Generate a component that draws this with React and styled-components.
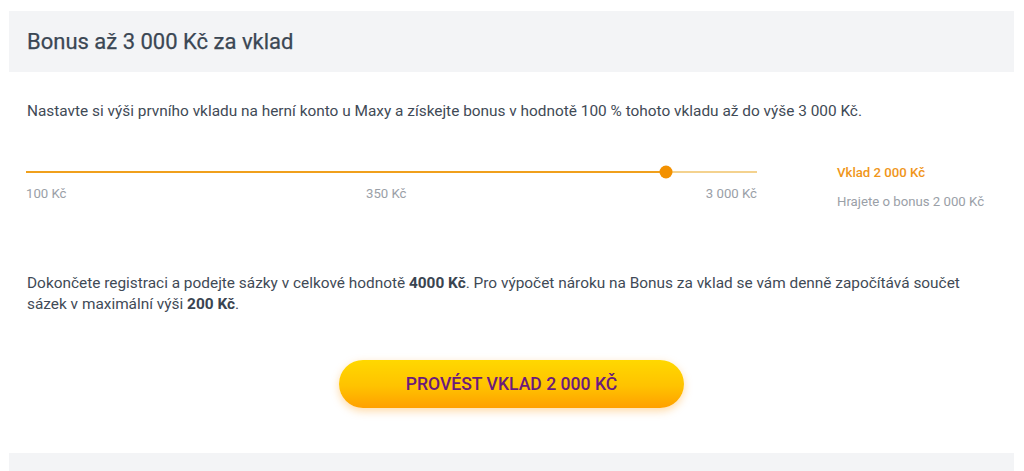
import React from "react";
import styled, { createGlobalStyle } from "styled-components";

const Global = createGlobalStyle`
  html, body { margin: 0; padding: 0; background: #fff; }
  body { font-family: Roboto, "Liberation Sans", Arial, sans-serif; }
`;

const Page = styled.div`
  width: 1005px;
  margin-left: 9px;
  padding-top: 11px;
  display: flex;
  flex-direction: column;
`;

const Header = styled.div`
  background: #f3f4f6;
  height: 61px;
  display: flex;
  align-items: center;
  padding-left: 18px;
`;

const Title = styled.h2`
  margin: 0;
  font-size: 22px;
  font-weight: 400;
  color: #3b4754;
  -webkit-text-stroke: 0.25px #3b4754;
`;

const Body = styled.div`
  padding: 29px 18px 0 18px;
  display: flex;
  flex-direction: column;
`;

const Para = styled.p`
  margin: 0;
  font-size: 15.4px;
  line-height: 21px;
  color: #3f4a56;
  b { font-weight: 700; color: #3a4450; }
`;

const SliderRow = styled.div`
  display: flex;
  margin-top: 43px;
  margin-left: -1px;
  height: 74px;
`;

const SliderCol = styled.div`
  width: 731px;
  display: flex;
  flex-direction: column;
`;

const Track = styled.div`
  position: relative;
  height: 2px;
  margin-top: 6px;
  background: #f4d28e;
`;

const Fill = styled.div`
  height: 100%;
  background: #f0a01c;
`;

const Thumb = styled.div`
  position: absolute;
  top: 50%;
  width: 13px;
  height: 13px;
  border-radius: 50%;
  background: #f39100;
  transform: translate(-50%, -50%);
`;

const Ticks = styled.div`
  display: grid;
  grid-template-columns: 340px 1fr auto;
  margin-top: 13px;
  font-size: 13.2px;
  line-height: 16px;
  color: #9aa0a7;
`;

const Tick = styled.span``;

const Info = styled.div`
  margin-left: 80px;
  display: flex;
  flex-direction: column;
  gap: 13px;
  font-size: 13.2px;
  line-height: 16px;
`;

const InfoLine = styled.span`
  color: ${(p) => (p.$accent ? "#f0961a" : "#9aa0a7")};
  font-weight: ${(p) => (p.$accent ? 500 : 400)};
`;

const Spacer = styled.div`
  height: 34px;
`;

const ButtonWrap = styled.div`
  display: flex;
  justify-content: center;
  margin-top: 45px;
`;

const Button = styled.button`
  width: 345px;
  height: 48px;
  border: none;
  border-radius: 24px;
  background: linear-gradient(180deg, #ffd800 0%, #ffc200 55%, #ffa000 100%);
  box-shadow: 0 3px 8px rgba(255, 150, 0, 0.35);
  color: #6b1a7c;
  font-family: Roboto, "Liberation Sans", Arial, sans-serif;
  font-size: 17.6px;
  font-weight: 500;
  cursor: pointer;
`;

const Footer = styled.div`
  margin-top: 45px;
  height: 20px;
  background: #f3f4f6;
`;

export default function App() {
  const pct = ((666 - 26) / 731) * 100;
  return (
    <>
      <Global />
      <Page>
        <Header>
          <Title>Bonus až 3 000 Kč za vklad</Title>
        </Header>
        <Body>
          <Para>
            Nastavte si výši prvního vkladu na herní konto u Maxy a získejte bonus v hodnotě 100 % tohoto vkladu až do výše 3 000 Kč.
          </Para>
          <SliderRow>
            <SliderCol>
              <Track>
                <Fill style={{ width: `${pct}%` }} />
                <Thumb style={{ left: `${pct}%` }} />
              </Track>
              <Ticks>
                <Tick>100 Kč</Tick>
                <Tick>350 Kč</Tick>
                <Tick>3 000 Kč</Tick>
              </Ticks>
            </SliderCol>
            <Info>
              <InfoLine $accent>Vklad 2 000 Kč</InfoLine>
              <InfoLine>Hrajete o bonus 2 000 Kč</InfoLine>
            </Info>
          </SliderRow>
          <Spacer />
          <Para>
            Dokončete registraci a podejte sázky v celkové hodnotě <b>4000 Kč</b>. Pro výpočet nároku na Bonus za vklad se vám denně započítává součet sázek v maximální výši <b>200 Kč</b>.
          </Para>
          <ButtonWrap>
            <Button>PROVÉST VKLAD 2 000 KČ</Button>
          </ButtonWrap>
        </Body>
        <Footer />
      </Page>
    </>
  );
}
